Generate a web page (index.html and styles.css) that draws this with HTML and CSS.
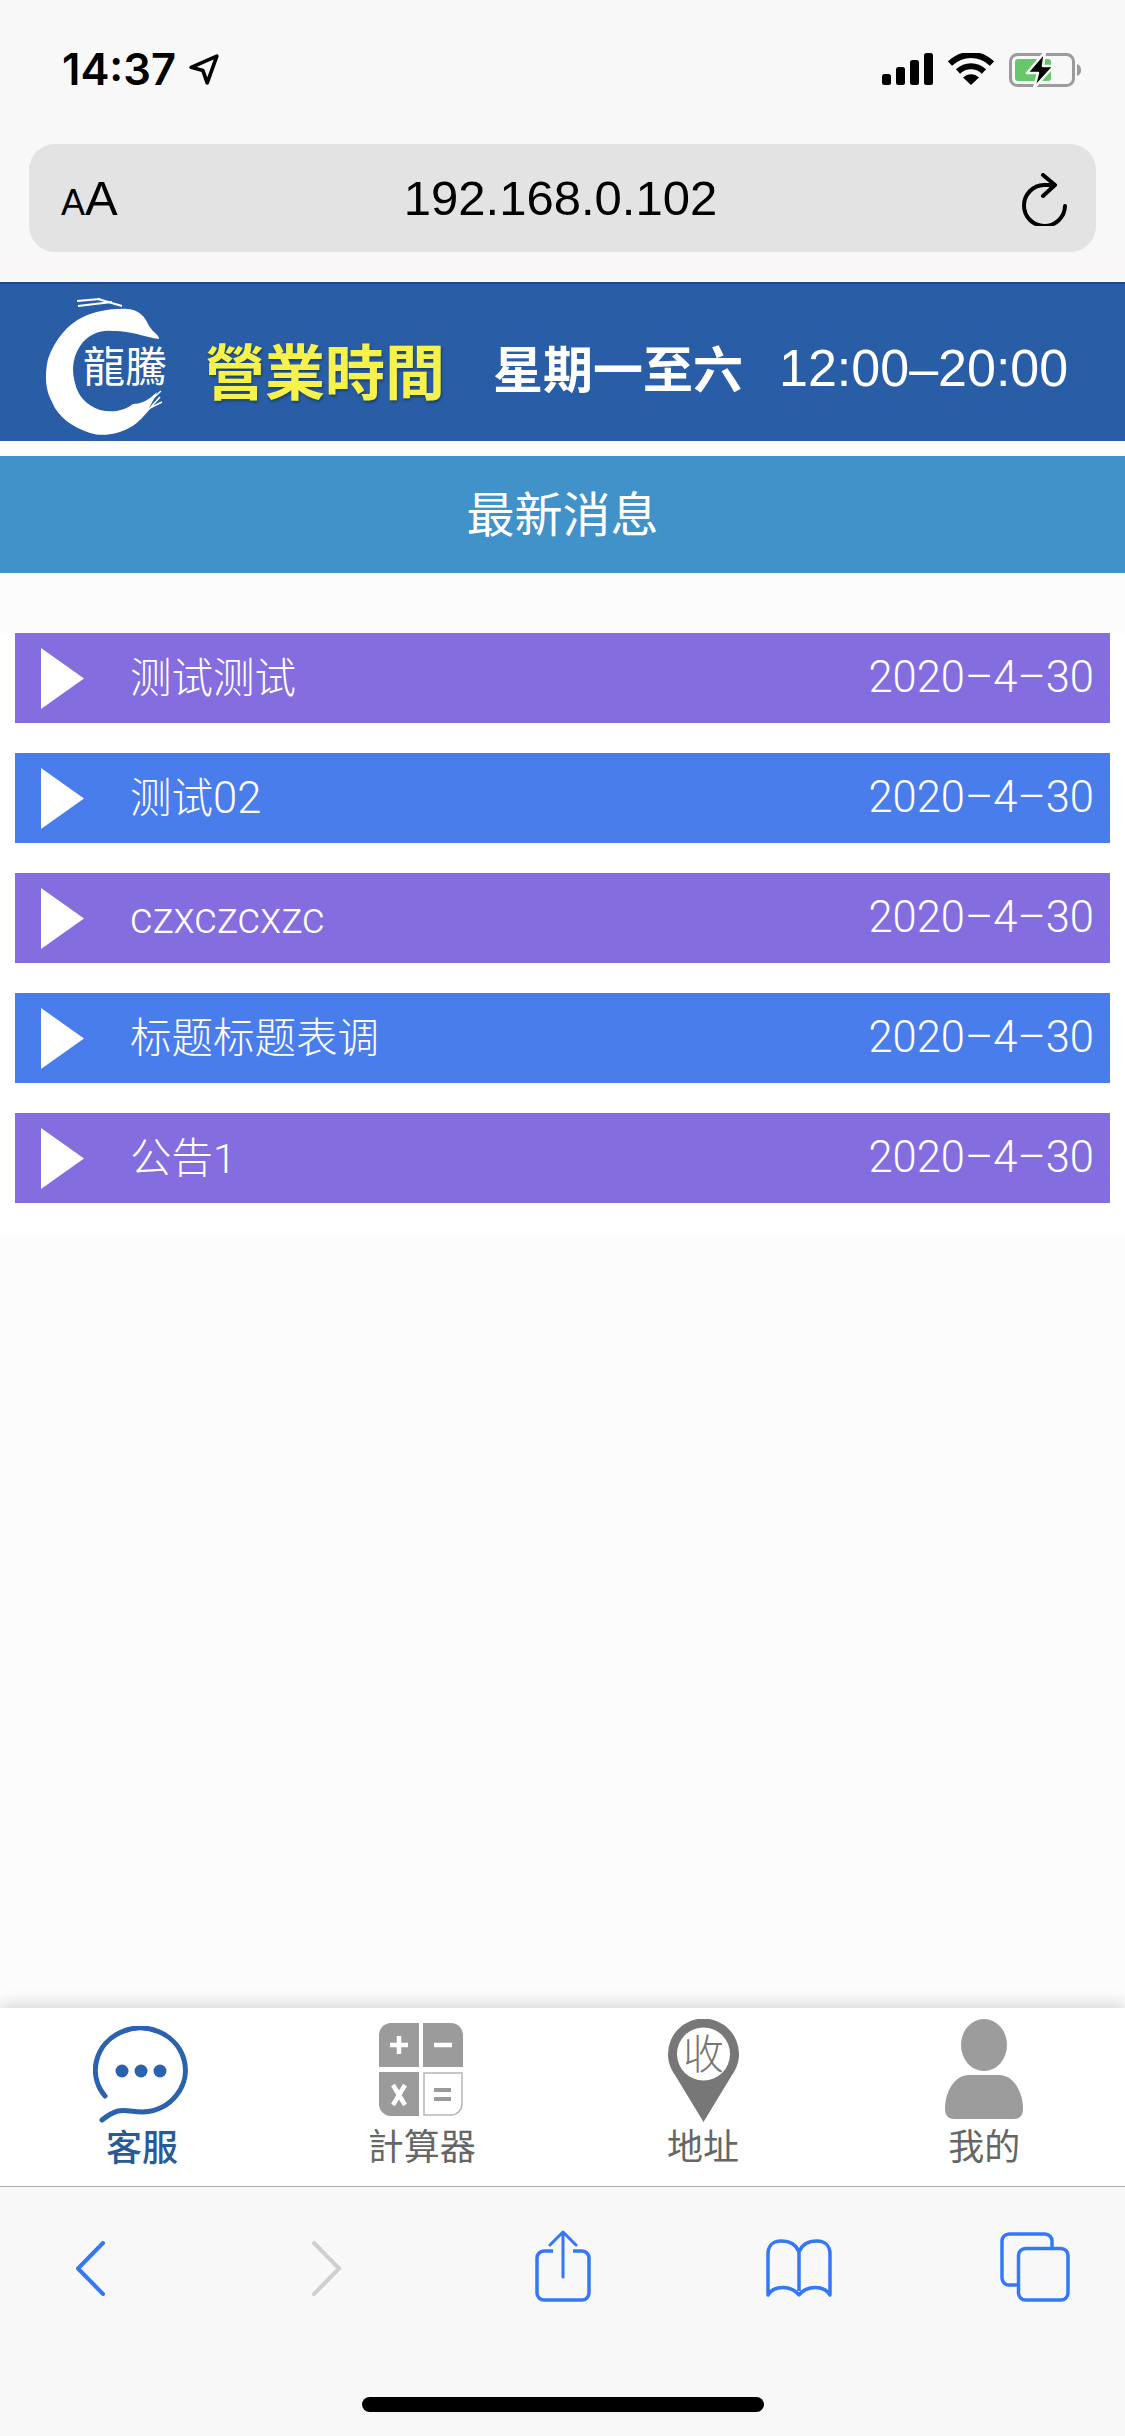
FILE: index.html
```html
<!DOCTYPE html>
<html lang="zh">
<head>
<meta charset="utf-8">
<title>最新消息</title>
<link rel="stylesheet" href="styles.css">
</head>
<body>
<div class="page">
  <header class="chrome">
    <div class="status">
      <div class="status-left">
        <span class="time">14:37</span>
        <svg class="loc" viewBox="0 0 28 29"><path d="M2 12.5 26 2 17 27 13 15.5Z" fill="none" stroke="#000" stroke-width="3.4" stroke-linejoin="round"/></svg>
      </div>
      <div class="status-right">
        <svg class="signal" viewBox="0 0 51 32"><rect x="0" y="21" width="9" height="11" rx="2.5"/><rect x="14" y="14" width="9" height="18" rx="2.5"/><rect x="28" y="7" width="9" height="25" rx="2.5"/><rect x="42" y="0" width="9" height="32" rx="2.5"/></svg>
        <svg class="wifi" viewBox="0 0 46 32"><path d="M2 10.5C14 -1 32 -1 44 10.5" fill="none" stroke="#000" stroke-width="6"/><path d="M10 18.5C17.5 11.5 28.5 11.5 36 18.5" fill="none" stroke="#000" stroke-width="6"/><path d="M15 24.5 23 32 31 24.5C26 20 20 20 15 24.5Z"/></svg>
        <svg class="battery" viewBox="0 0 73 34">
          <rect x="1.5" y="1.5" width="63" height="31" rx="7" fill="none" stroke="#9b9b9b" stroke-width="3"/>
          <rect x="6" y="6" width="36" height="22" rx="3" fill="#66c86a"/>
          <path d="M68 11C71 12 72 14 72 17S71 22 68 23Z" fill="#9b9b9b"/>
          <path d="M36 -1 18 20H29L25 35 45 13H34Z" fill="#000" stroke="#f8f8f8" stroke-width="2.5" stroke-linejoin="round"/>
        </svg>
      </div>
    </div>
    <div class="url-wrap">
      <div class="url-bar">
        <span class="aa"><span class="aa-small">A</span><span class="aa-big">A</span></span>
        <span class="url">192.168.0.102</span>
        <svg class="reload" viewBox="0 0 46 53"><path d="M43 33A20.5 20.5 0 1 1 22 12H30" fill="none" stroke="#000" stroke-width="4" stroke-linecap="round"/><path d="M21 2 33 12 21 23" fill="none" stroke="#000" stroke-width="4" stroke-linecap="round" stroke-linejoin="round"/></svg>
      </div>
    </div>
  </header>

  <section class="banner">
    <svg class="logo" viewBox="40 295 135 146">
      <path fill="#fff" d="M159 340C159 335 152 334 147 323C143 315 137 311 128 310C112 309 96 312 83 318C68 325 55 340 48 360C44 378 46 392 52 403C58 418 72 428 90 434C103 438 118 435 129 429C140 424 150 410 157 393C148 402 140 405 133 405C124 412 112 414 100 411C86 406 78 397 75 384C71 370 73 355 83 343C92 334 101 331 112 332C128 331 145 338 159 340Z"/>
      <path d="M77 302 100 300M78 307 112 303M98 300 122 307" fill="none" stroke="#fff" stroke-width="2"/>
      <path d="M136 415 161 392M140 420 160 398M148 410 162 403" fill="none" stroke="#fff" stroke-width="1.5"/>
      <text x="83" y="383" class="logo-text">龍騰</text>
    </svg>
    <span class="hours-title">營業時間</span>
    <span class="hours-days">星期一至六</span>
    <span class="hours-time">12:00–20:00</span>
  </section>

  <h1 class="title">最新消息</h1>

  <ul class="news">
    <li class="news-row purple"><svg class="tri" viewBox="0 0 43 61"><path d="M0 0 43 30.5 0 61Z"/></svg><span class="news-name">测试测试</span><span class="news-date">2020–4–30</span></li>
    <li class="news-row blue"><svg class="tri" viewBox="0 0 43 61"><path d="M0 0 43 30.5 0 61Z"/></svg><span class="news-name">测试<span class="latin">02</span></span><span class="news-date">2020–4–30</span></li>
    <li class="news-row purple"><svg class="tri" viewBox="0 0 43 61"><path d="M0 0 43 30.5 0 61Z"/></svg><span class="news-name"><span class="latin">czxczcxzc</span></span><span class="news-date">2020–4–30</span></li>
    <li class="news-row blue"><svg class="tri" viewBox="0 0 43 61"><path d="M0 0 43 30.5 0 61Z"/></svg><span class="news-name">标题标题表调</span><span class="news-date">2020–4–30</span></li>
    <li class="news-row purple"><svg class="tri" viewBox="0 0 43 61"><path d="M0 0 43 30.5 0 61Z"/></svg><span class="news-name">公告1</span><span class="news-date">2020–4–30</span></li>
  </ul>

  <div class="spacer"></div>

  <nav class="tabs">
    <a class="tab active">
      <span class="tab-icon">
        <svg class="ic-chat" viewBox="0 0 96 98"><path d="M12 70A45 42 0 1 1 50 86C38 86 32 83 25 85C18 87 14 90 9 94" fill="none" stroke="#2a62ae" stroke-width="5" stroke-linecap="round"/><circle cx="29" cy="45" r="6.5" fill="#2a62ae"/><circle cx="48" cy="45" r="6.5" fill="#2a62ae"/><circle cx="67" cy="45" r="6.5" fill="#2a62ae"/></svg>
      </span>
      <span class="tab-label">客服</span>
    </a>
    <a class="tab">
      <span class="tab-icon">
        <svg class="ic-calc" viewBox="0 0 85 94">
          <path d="M12 0H40V44H0V12A12 12 0 0 1 12 0Z" fill="#9b9b9b"/>
          <path d="M44 0H72A12 12 0 0 1 84 12V44H44Z" fill="#9b9b9b"/>
          <path d="M0 49H40V93H12A12 12 0 0 1 0 81Z" fill="#9b9b9b"/>
          <path d="M45 50H83V81A11 11 0 0 1 72 92H45Z" fill="#fff" stroke="#b5b5b5" stroke-width="1.5"/>
          <path d="M20 13V31M11 22H29M55 22H73" stroke="#fff" stroke-width="4.5" fill="none"/>
          <path d="M14 62 26 82M26 62 14 82" stroke="#fff" stroke-width="4.5" fill="none"/>
          <path d="M55 67H72M55 76H72" stroke="#9b9b9b" stroke-width="4" fill="none"/>
        </svg>
      </span>
      <span class="tab-label">計算器</span>
    </a>
    <a class="tab">
      <span class="tab-icon">
        <svg class="ic-pin" viewBox="0 0 71 103"><path d="M35.500 103 7 56C2 49 0 42 0 35A35.500 35.500 0 0 1 71 35C71 42 69 49 64 56Z" fill="#777"/><circle cx="35.500" cy="35" r="26.500" fill="#fff"/><text x="35.500" y="50" text-anchor="middle" class="pin-text">收</text></svg>
      </span>
      <span class="tab-label">地址</span>
    </a>
    <a class="tab">
      <span class="tab-icon">
        <svg class="ic-user" viewBox="0 0 78 100"><ellipse cx="39" cy="26" rx="23" ry="26" fill="#9c9c9c"/><path d="M24 56H54C68 56 78 72 78 90C78 96 75 100 69 100H9C3 100 0 96 0 90C0 72 10 56 24 56Z" fill="#9c9c9c"/></svg>
      </span>
      <span class="tab-label">我的</span>
    </a>
  </nav>

  <footer class="toolbar">
    <div class="tool-row">
      <span class="tool"><svg class="ic-back ic-prev" viewBox="0 0 30 55"><path d="M28 2 3 27.500 28 53" fill="none" stroke="#3478f6" stroke-width="4" stroke-linecap="round" stroke-linejoin="round"/></svg></span>
      <span class="tool"><svg class="ic-back" viewBox="0 0 30 55"><path d="M2 2 27 27.500 2 53" fill="none" stroke="#cfcfcf" stroke-width="4" stroke-linecap="round" stroke-linejoin="round"/></svg></span>
      <span class="tool"><svg class="ic-share" viewBox="0 0 56 72"><path d="M18 21H9A7 7 0 0 0 2 28V63A7 7 0 0 0 9 70H47A7 7 0 0 0 54 63V28A7 7 0 0 0 47 21H38" fill="none" stroke="#3478f6" stroke-width="3.500"/><path d="M28 2V47M15 15 28 2 41 15" fill="none" stroke="#3478f6" stroke-width="3" stroke-linecap="round" stroke-linejoin="round"/></svg></span>
      <span class="tool"><svg class="ic-book" viewBox="0 0 66 58"><path d="M33 13C30 5 23 2 15 2C7 2 2 7 2 15V56C8 46 25 46 33 56C41 46 58 46 64 56V15C64 7 59 2 51 2C43 2 36 5 33 13V52" fill="none" stroke="#3478f6" stroke-width="3.500" stroke-linejoin="round"/></svg></span>
      <span class="tool"><svg class="ic-tabs" viewBox="0 0 70 70"><path d="M17 53H9A7 7 0 0 1 2 46V9A7 7 0 0 1 9 2H45A7 7 0 0 1 52 9V15" fill="none" stroke="#3478f6" stroke-width="3.500"/><rect x="18.500" y="16.500" width="49.500" height="51.500" rx="7" fill="none" stroke="#3478f6" stroke-width="3.500"/></svg></span>
    </div>
    <div class="home-bar"></div>
  </footer>
</div>
</body>
</html>
```

FILE: styles.css
```css
* { box-sizing: border-box; }
html, body { margin: 0; padding: 0; }
body { font-family: "Liberation Sans", "Noto Sans CJK SC", sans-serif; background: #fcfcfc; }
.page { width: 1125px; height: 2436px; display: flex; flex-direction: column; overflow: hidden; }

.chrome { background: #f8f8f8; height: 282px; flex: none; }
.status { height: 144px; padding: 0 43px 0 62px; display: flex; justify-content: space-between; align-items: flex-start; }
.status-left { display: flex; align-items: center; padding-top: 48px; }
.time { font-family: "Inter", "Liberation Sans", sans-serif; font-weight: 600; font-size: 43.5px; line-height: 42px; color: #000; }
.loc { width: 30px; height: 31px; margin-left: 13px; }
.status-right { display: flex; align-items: flex-start; padding-top: 53px; }
.signal { width: 51px; height: 32px; }
.wifi { width: 46px; height: 32px; margin-left: 15px; }
.battery { width: 73px; height: 34px; margin-left: 15px; }

.url-wrap { padding: 0 29px; }
.url-bar { height: 108px; border-radius: 26px; background: #e3e3e3; display: grid; grid-template-columns: 1fr auto 1fr; align-items: center; padding: 0 30px 0 26px; color: #000; }
.aa { font-size: 49px; line-height: 60px; display: flex; align-items: baseline; margin: 4px 0 0 6px; }
.aa-small { font-size: 36px; }
.url { font-size: 49px; line-height: 60px; }
.reload { width: 46px; height: 53px; margin: 2px -2px 0 0; justify-self: end; }

.banner { height: 159px; flex: none; background: #295ea6; border-top: 2px solid #1d4a88; display: flex; align-items: center; padding-left: 40px; }
.logo { width: 135px; height: 146px; flex: none; margin-top: 8px; }
.logo-text { font-family: "Noto Sans CJK TC", sans-serif; font-size: 42px; fill: #fff; }
.hours-title { font-family: "Noto Sans CJK TC", sans-serif; font-size: 60px; font-weight: 700; color: #f6f24b; margin: 12px 0 0 30px; line-height: 70px; text-shadow: 1px 2px 3px rgba(0,0,0,.35); }
.hours-days { font-family: "Noto Sans CJK TC", sans-serif; font-size: 50px; font-weight: 700; color: #fff; margin: 6px 0 0 48px; line-height: 70px; }
.hours-time { font-size: 52px; color: #fff; margin: 10px 0 0 36px; line-height: 70px; }

.title { height: 117px; flex: none; margin: 15px 0 60px; background: #4292ca; color: #fff; font-family: "Noto Sans CJK SC", sans-serif; font-weight: 400; font-size: 48px; line-height: 111px; text-align: center; }

.news { list-style: none; margin: 0; padding: 0 15px; background: #fff; flex: none; }
.news-row { height: 90px; margin-bottom: 30px; display: flex; align-items: center; padding: 0 16px 0 26px; color: #fff; }
.purple { background: #846edf; }
.blue { background: #4a7dec; }
.tri { width: 43px; height: 61px; fill: #fff; flex: none; }
.news-name { font-family: "Roboto", "Noto Sans CJK SC", sans-serif; font-weight: 300; font-size: 41.5px; margin: 2px 0 0 46px; flex: 1; line-height: 50px; }
.latin { font-size: 43.5px; }
.news-date { font-family: "Roboto", sans-serif; font-weight: 300; font-size: 43.5px; line-height: 50px; }

.spacer { flex: 1; background: #fcfcfc; }

.tabs { height: 178px; flex: none; background: #fff; display: flex; box-shadow: 0 -3px 16px rgba(0,0,0,.16); padding-top: 11px; }
.tab { flex: 1; display: flex; flex-direction: column; align-items: center; color: #666; }
.tab-icon { height: 105px; display: flex; align-items: flex-start; }
.tab-label { font-family: "Noto Sans CJK TC", sans-serif; font-size: 36px; line-height: 40px; }
.active { color: #285a96; font-weight: 500; }
.active .tab-label { padding: 1px 0 0 3px; }
.ic-chat { width: 96px; height: 98px; margin-top: 7px; }
.ic-calc { width: 85px; height: 94px; margin-top: 4px; }
.ic-pin { width: 71px; height: 103px; }
.ic-user { width: 78px; height: 100px; }
.pin-text { font-family: "Noto Sans CJK TC", sans-serif; font-size: 41px; font-weight: 300; fill: #777; }

.toolbar { height: 250px; flex: none; background: #f8f8f8; border-top: 1px solid #a9a9a9; padding-top: 43px; display: flex; flex-direction: column; align-items: center; }
.tool-row { width: 100%; height: 72px; display: flex; justify-content: space-between; padding: 0 50px 0 51px; }
.tool { width: 80px; height: 72px; display: flex; align-items: center; justify-content: center; }
.ic-back { width: 30px; height: 55px; margin-top: 5px; }
.ic-prev { margin-left: -2px; }
.ic-share { width: 56px; height: 72px; }
.ic-book { width: 66px; height: 58px; margin-top: 3px; }
.ic-tabs { width: 70px; height: 70px; margin-top: 2px; }
.home-bar { width: 402px; height: 15px; border-radius: 8px; background: #000; margin-top: 95px; }
```
